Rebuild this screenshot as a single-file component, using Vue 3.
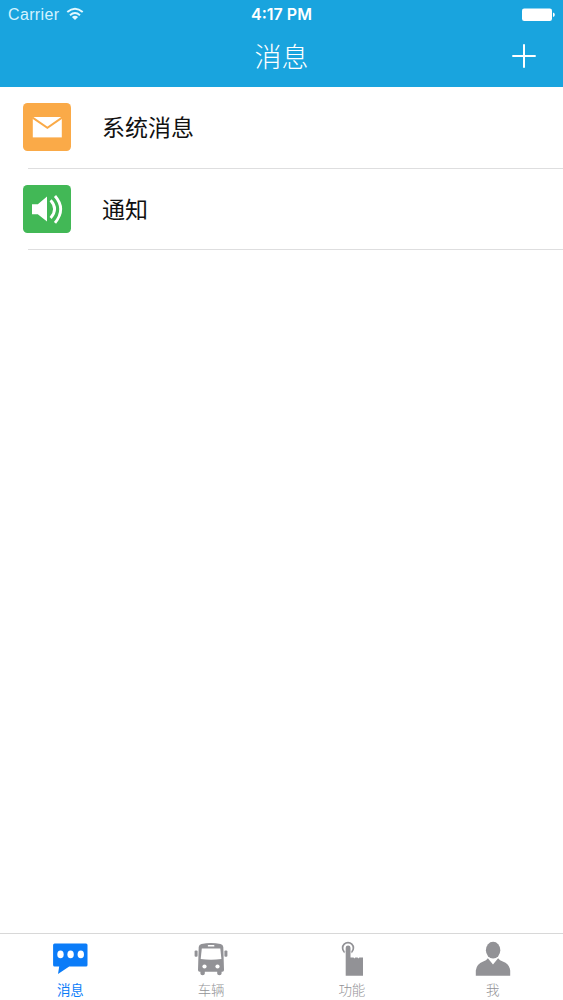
<template>
  <div class="screen">
    <header class="header">
      <div class="status">
        <div class="carrier">
          <span>Carrier</span>
          <svg class="wifi" width="18" height="14" viewBox="0 0 18 14">
            <g fill="none" stroke="#e4f8ff" stroke-width="2">
              <path d="M1.3 5.1Q9-1.7 16.7 5.1" />
              <path d="M4 8.2Q9 3.9 14 8.2" />
            </g>
            <path d="M5.9 9.9Q9 7.6 12.1 9.9L9 13Z" fill="#e4f8ff" />
          </svg>
        </div>
        <div class="time">4:17 PM</div>
        <svg class="battery" width="34" height="14" viewBox="0 0 34 14">
          <rect x="1" y="0.4" width="30" height="12.6" rx="2.2" fill="#fff" />
          <path d="M32 4.5Q33.8 4.9 33.8 6.7T32 8.9Z" fill="#fff" />
        </svg>
      </div>
      <div class="nav">
        <h1 class="title">消息</h1>
        <svg class="add" width="24" height="24" viewBox="0 0 24 24">
          <path d="M12 0.3V23.7M0.3 12H23.7" stroke="#fff" stroke-width="2" />
        </svg>
      </div>
    </header>

    <main class="list">
      <div v-for="item in items" :key="item.label" class="row">
        <svg class="row-icon" width="48" height="48" viewBox="0 0 48 48">
          <rect width="48" height="48" rx="4.5" :fill="item.color" />
          <template v-if="item.icon === 'mail'">
            <path d="M9.8 14H38.8V34.4H9.8Z" fill="#fff" />
            <path
              d="M9.2 14.4L24.4 24.8L39.4 14.4"
              fill="none"
              :stroke="item.color"
              stroke-width="1.9"
            />
          </template>
          <template v-else>
            <path d="M9 19.2H14.8L24 11.5V36.5L14.8 29.2H9Z" fill="#fff" />
            <g fill="none" stroke="#fff" stroke-width="2.8">
              <path d="M27.6 15.2Q35.6 24 27.6 33" />
              <path d="M32 11Q43.4 24 32 37.8" />
            </g>
          </template>
        </svg>
        <span class="row-label">{{ item.label }}</span>
      </div>
    </main>

    <footer class="tabs">
      <div
        v-for="tab in tabs"
        :key="tab.name"
        class="tab"
        :class="{ active: tab.name === current }"
        @click="current = tab.name"
      >
        <svg
          class="tab-icon"
          width="40"
          height="36"
          viewBox="0 0 40 36"
          fill="currentColor"
        >
          <template v-if="tab.name === 'message'">
            <path
              d="M4.6 2.6H36Q37.5 2.6 37.5 4.1V24Q37.5 25.5 36 25.5H19.2L8 33L9.2 25.5H4.6Q3.1 25.5 3.1 24V4.1Q3.1 2.6 4.6 2.6Z"
            />
            <g fill="#fff">
              <ellipse cx="10.5" cy="13.4" rx="3.2" ry="3.8" />
              <ellipse cx="20.6" cy="13.4" rx="3.2" ry="3.8" />
              <ellipse cx="30.8" cy="13.4" rx="3.2" ry="3.8" />
            </g>
          </template>
          <template v-else-if="tab.name === 'vehicle'">
            <path
              d="M10.5 2.9Q20 1.3 29.5 2.9Q32 3.3 32.3 6L33 29Q33 30.8 31.4 30.8H30.6V32.4Q30.6 34.2 28.4 34.2T26.2 32.4V30.8H13.8V32.4Q13.8 34.2 11.6 34.2T9.4 32.4V30.8H8.6Q7 30.8 7 29L7.7 6Q8 3.3 10.5 2.9Z"
            />
            <rect x="3.6" y="9.5" width="3" height="6.3" rx="1" />
            <rect x="33.4" y="9.5" width="3" height="6.3" rx="1" />
            <g fill="#fff">
              <rect x="16.8" y="4" width="6.6" height="1.6" rx="0.5" />
              <path d="M10.8 7.6H29.3L30.4 18Q20 19.4 9.7 18Z" />
              <circle cx="13.5" cy="25.5" r="2.1" />
              <circle cx="26.5" cy="25.5" r="2.1" />
            </g>
          </template>
          <template v-else-if="tab.name === 'feature'">
            <circle
              cx="16"
              cy="7"
              r="5.4"
              fill="none"
              stroke="currentColor"
              stroke-width="1.7"
            />
            <!-- white gap where the finger leaves the ring -->
            <path d="M12.6 10.4H19.4V14H12.6Z" fill="#fff" />
            <path
              d="M13.7 6.8Q13.7 4.4 16.1 4.4T18.5 6.8V16.6H21.6L22.4 17.5L23.3 16.6H25.6L26.4 17.5L27.3 16.6H31V34.7H13.7Z"
            />
          </template>
          <template v-else>
            <ellipse cx="20.1" cy="9.2" rx="7.2" ry="8.4" />
            <path
              d="M14.9 17.2L20 23.5L25.1 17.2Q26.7 19.3 29.8 20.6Q36.5 23.2 37.2 29.5V34.7H2.8V29.5Q3.5 23.2 10.2 20.6Q13.3 19.3 14.9 17.2Z"
            />
          </template>
        </svg>
        <span class="tab-label">{{ tab.label }}</span>
      </div>
    </footer>
  </div>
</template>

<script setup>
import { ref } from "vue";

const items = [
  { label: "系统消息", icon: "mail", color: "#faaa48" },
  { label: "通知", icon: "sound", color: "#42b856" },
];

const tabs = [
  { name: "message", label: "消息" },
  { name: "vehicle", label: "车辆" },
  { name: "feature", label: "功能" },
  { name: "me", label: "我" },
];

const current = ref("message");
</script>

<style>
body {
  margin: 0;
}
</style>

<style scoped>
.screen {
  display: flex;
  flex-direction: column;
  height: 1000px;
  background: #fff;
  font-family: "Liberation Sans", "Noto Sans CJK SC", sans-serif;
}

.header {
  height: 87px;
  background: #19a4de;
  color: #fff;
}

.status {
  display: grid;
  grid-template-columns: 1fr auto 1fr;
  align-items: center;
  height: 29px;
  padding: 0 8px;
}

.carrier {
  display: flex;
  align-items: center;
  gap: 7px;
  color: #d4f3ff;
  font-size: 16px;
  letter-spacing: 0.35px;
}

.wifi {
  margin-top: -2px;
}

.time {
  margin-top: -1px;
  font-family: Inter, "Liberation Sans", sans-serif;
  font-size: 16px;
  font-weight: 600;
}

.battery {
  justify-self: end;
}

.nav {
  display: grid;
  grid-template-columns: 1fr auto 1fr;
  align-items: center;
  height: 54px;
  padding: 0 27px;
}

.title {
  grid-column: 2;
  margin: 0;
  padding-top: 4px;
  font-size: 27px;
  font-weight: 300;
  line-height: 50px;
}

.add {
  justify-self: end;
}

.list {
  flex: 1;
}

.row {
  display: flex;
  align-items: center;
  height: 80.5px;
  margin-left: 28px;
  border-bottom: 1px solid #dededf;
}

.row-icon {
  margin-left: -5px;
}

.row-label {
  margin-left: 31px;
  padding-top: 2px;
  color: #111;
  font-size: 23px;
  line-height: 32px;
}

.tabs {
  display: flex;
  height: 67px;
  box-sizing: border-box;
  border-top: 1px solid #d8d8d8;
}

.tab {
  flex: 1;
  display: flex;
  flex-direction: column;
  align-items: center;
  padding-top: 7px;
  color: #929296;
}

.tab.active {
  color: #0b7cf8;
}

.tab-icon {
  flex-shrink: 0;
}

.tab-label {
  margin-top: 4px;
  font-size: 13.5px;
  font-weight: 300;
  line-height: 19px;
}

.active .tab-label {
  font-weight: 400;
}
</style>
